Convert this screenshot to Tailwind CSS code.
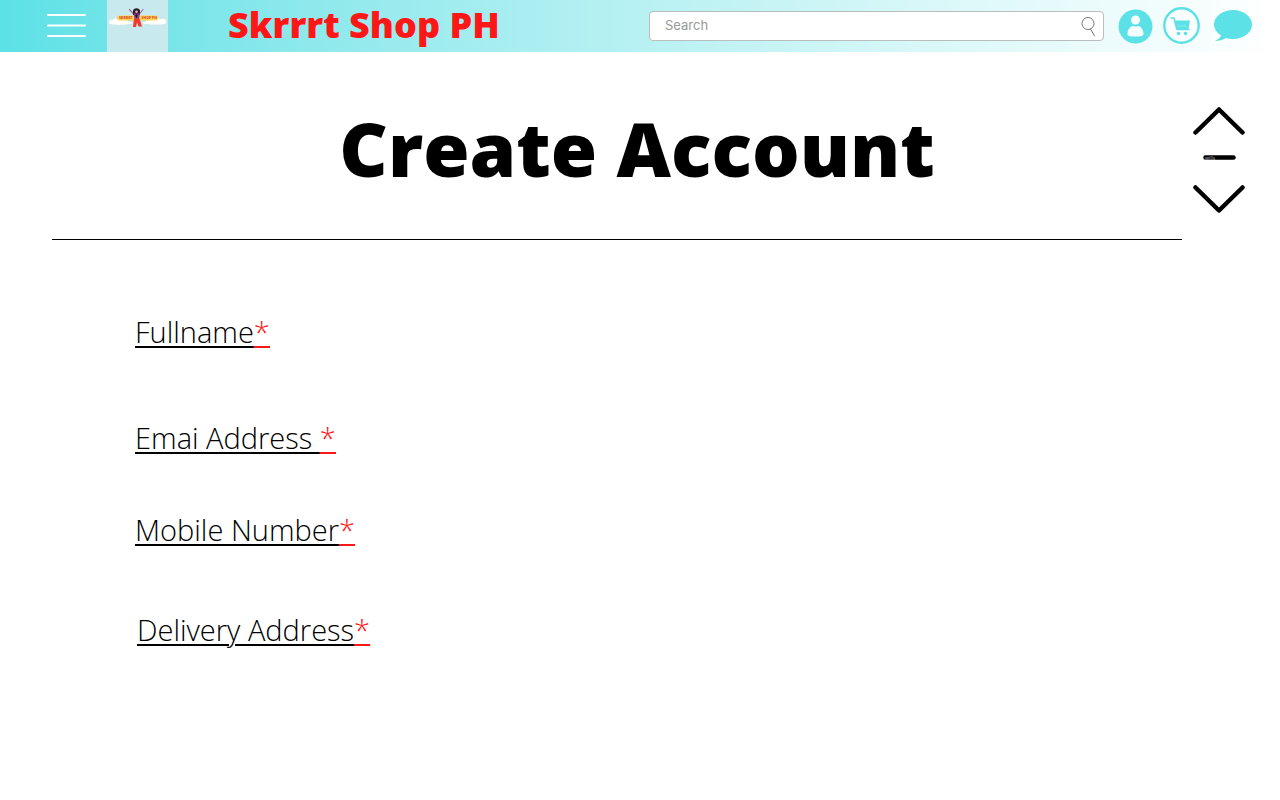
<!DOCTYPE html>
<html lang="en">
<head>
<meta charset="utf-8">
<meta name="viewport" content="width=device-width, initial-scale=1">
<title>Skrrrt Shop PH - Create Account</title>
<script src="https://cdn.jsdelivr.net/npm/@tailwindcss/browser@4"></script>
</head>
<body class="min-h-screen bg-white font-['Open_Sans','Noto_Sans',sans-serif] text-black">
<header class="flex h-[52px] items-center bg-linear-to-r from-[#5ce1e6] to-white pr-7 pl-[46px]">
  <button type="button" aria-label="Menu" class="shrink-0 pb-[2px]">
    <svg class="block h-6 w-[41px]" viewBox="0 0 41 24" stroke="#fff" stroke-width="2" stroke-linecap="round"><path d="M2 2h37M2 12.500h37M2 23h37"/></svg>
  </button>
  <a href="#" aria-label="Home" class="ml-5 shrink-0 self-start">
    <svg class="block h-[52px] w-[61px]" viewBox="0 0 61 52">
      <rect width="61" height="52" fill="#c8e9ed"/>
      <g fill="#fff"><path d="M2 23c0-3 2-4 4-3 1-2 4-2 5 0h8l7 3c-4 2-22 3-24 0zM35 23l7-3h6c1-2 4-2 5-.500 2-1.500 5-1 6 1 1 4-2 4-8 4-6 0-13 0-16-1.500z"/></g>
      <rect x="10" y="15.500" width="41" height="5" rx="2.500" fill="#fbd65b"/>
      <g font-family="Open Sans" font-weight="800" font-size="3.500" fill="#dd552b"><text x="12" y="19.300">SKRRRT</text><text x="34.500" y="19.300">SHOP PH</text></g>
      <path d="M22.500 9.500l4.500 5M36 9.500l-4 5" stroke="#9a6d98" stroke-width="1.200" stroke-linecap="round"/>
      <path d="M26 15v-4.500c1-3 6-3 7 0V15z" fill="#2a1b2f"/>
      <circle cx="29.500" cy="11.800" r="1.300" fill="#e9b7a4"/>
      <path d="M26.500 13.500h6.500l-1 5.500h-4.500z" fill="#8d3f88"/>
      <path d="M29.500 13.500l1.300 2-1.300 3-1.300-3z" fill="#2a1b2f"/>
      <path d="M27 18.500h5.500l2.500 8h-3.500l-1.500-4-1 4.500h-3z" fill="#f03a2b"/>
    </svg>
  </a>
  <a href="#" class="ml-[60px] pb-[2px] text-4xl font-extrabold whitespace-nowrap text-[#ff1616]">Skrrrt Shop PH</a>
  <form role="search" class="ml-auto flex h-[30px] w-[455px] items-center rounded-[4px] border border-[#b9bdbd] bg-white pr-1 pl-[15px]">
    <input type="search" aria-label="Search" placeholder="Search" class="min-w-0 flex-1 bg-transparent font-['Inter',sans-serif] text-[13px] outline-none placeholder:text-[#999999]">
    <button type="submit" aria-label="Submit search">
      <svg class="block h-[22px] w-5" viewBox="0 0 20 22" fill="none" stroke="#777" stroke-width="1"><circle cx="9" cy="8.500" r="6"/><path d="M11.500 14l4 7" stroke-linecap="round"/></svg>
    </button>
  </form>
  <nav class="ml-[14px] flex shrink-0 items-center gap-[10px] pb-[2px]" aria-label="Account">
    <a href="#" aria-label="Profile" class="pt-[2px]"><svg class="block size-[35px]" viewBox="0 0 35 35"><circle cx="17.500" cy="17.500" r="17" fill="#5ce1e6"/><circle cx="17.500" cy="11" r="4.500" fill="#f5fefe"/><path d="M9.500 25c0-4.500 3-8 6-8q2 1 4 0c3 0 6 3.500 6 8 0 2-2 2.500-8 2.500s-8-.5-8-2.500z" fill="#f5fefe"/></svg></a>
    <a href="#" aria-label="Cart"><svg class="block size-[37px]" viewBox="0 0 37 37"><circle cx="18.500" cy="18.500" r="17.200" fill="#fafefe" stroke="#5ce1e6" stroke-width="2.400"/><path d="M8 11h3l3 11.500h12" fill="none" stroke="#5ce1e6" stroke-width="1.500" stroke-linecap="round" stroke-linejoin="round"/><path d="M11 13.500h16l-1.500 8.500H13.500z" fill="#5ce1e6"/><circle cx="15.500" cy="26.500" r="1.800" fill="#5ce1e6"/><circle cx="22.500" cy="26.500" r="1.800" fill="#5ce1e6"/><text x="14" y="20" font-family="Open Sans" font-size="4" fill="#a5f0f2">Cook</text></svg></a>
    <a href="#" aria-label="Messages" class="ml-1"><svg class="block h-[31px] w-[38px]" viewBox="0 0 38 31" fill="#5ce1e6"><path d="M19 0c10.500 0 19 6.500 19 14.500S29.500 29 19 29c-2.500 0-5-.4-7-1-3 2-7 3-11 3 3-1.500 5-3 6-5.500C2.500 22.500 0 18.500 0 14.500 0 6.500 8.500 0 19 0z"/></svg></a>
  </nav>
</header>
<main class="flex items-start">
  <div class="min-w-0 flex-1 pl-[52px]">
    <h1 class="border-b border-black pt-11 pb-[39px] pl-10 text-center text-[75px] leading-[104px] font-extrabold whitespace-nowrap">Create Account</h1>
    <form class="flex flex-col pt-[72px] pl-[83px] text-[29px] leading-10 font-light">
      <div class="mb-[66px] flex"><label for="fullname" class="whitespace-pre underline decoration-2 underline-offset-3">Fullname<span class="text-[#ff1616] underline decoration-2 underline-offset-3">*</span></label><input id="fullname" name="fullname" type="text" required class="ml-4 min-w-0 flex-1 outline-none"></div>
      <div class="mb-[52px] flex"><label for="email" class="whitespace-pre underline decoration-2 underline-offset-3">Emai Address <span class="text-[#ff1616] underline decoration-2 underline-offset-3">*</span></label><input id="email" name="email" type="email" required class="ml-4 min-w-0 flex-1 outline-none"></div>
      <div class="mb-[60px] flex"><label for="mobile" class="whitespace-pre underline decoration-2 underline-offset-3">Mobile Number<span class="text-[#ff1616] underline decoration-2 underline-offset-3">*</span></label><input id="mobile" name="mobile" type="tel" required class="ml-4 min-w-0 flex-1 outline-none"></div>
      <div class="flex pl-[2px]"><label for="address" class="whitespace-pre underline decoration-2 underline-offset-3">Delivery Address<span class="text-[#ff1616] underline decoration-2 underline-offset-3">*</span></label><input id="address" name="address" type="text" required class="ml-4 min-w-0 flex-1 outline-none"></div>
    </form>
  </div>
  <aside class="flex w-[98px] shrink-0 flex-col items-center pt-[54px] pr-6" aria-label="Page scroll">
    <button type="button" aria-label="Scroll up"><svg class="block h-[30px] w-[52px]" viewBox="0 0 52 30" fill="none" stroke="#000" stroke-width="4.500" stroke-linecap="round" stroke-linejoin="round"><path d="M2.500 26.500L26 3.500l23.500 23"/></svg></button>
    <svg class="mt-[19px] mb-6 block h-[5px] w-[33px]" viewBox="0 0 33 5"><path d="M2.500 2.500h28" stroke="#000" stroke-width="4.500" stroke-linecap="round"/><text x="2" y="5" font-family="Open Sans" font-size="5" fill="#bbb">wills</text></svg>
    <button type="button" aria-label="Scroll down"><svg class="block h-[30px] w-[52px]" viewBox="0 0 52 30" fill="none" stroke="#000" stroke-width="4.500" stroke-linecap="round" stroke-linejoin="round"><path d="M2.500 3.500L26 26.500l23.500-23"/></svg></button>
  </aside>
</main>
</body>
</html>
